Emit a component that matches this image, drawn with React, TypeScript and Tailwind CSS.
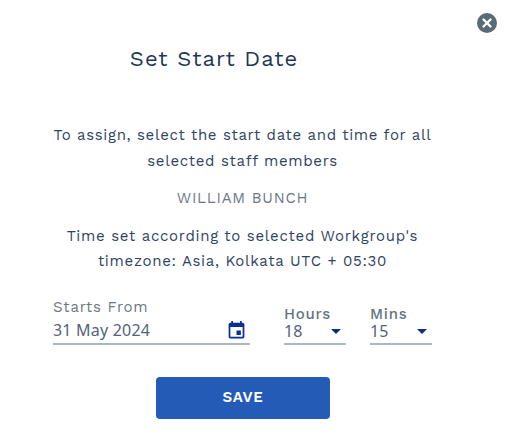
import { X } from "lucide-react";

const textFont = "font-['Work_Sans',Inter,sans-serif]";
const valueFont = "font-['Noto_Sans',sans-serif]";

function CalendarIcon() {
  return (
    <svg viewBox="0 0 24 24" className="mt-px size-[21px] fill-[#0b2f96]" aria-hidden="true">
      <path d="M19 3h-1V1h-2v2H8V1H6v2H5c-1.11 0-1.99.9-1.99 2L3 19c0 1.1.89 2 2 2h14c1.1 0 2-.9 2-2V5c0-1.1-.9-2-2-2zm0 16H5V8h14v11zm-2-7h-5v5h5v-5z" />
    </svg>
  );
}

function TimeSelect({ label, value }: { label: string; value: string }) {
  return (
    <div className="w-[62px]">
      <div className="h-4 text-[15px] leading-4 font-medium tracking-[0.8px] text-[#64737e]">
        {label}
      </div>
      <button
        type="button"
        className={`flex h-[23px] w-full items-center justify-between border-b-2 border-[#a9b8c5] pr-[5px] pb-[3px] text-base leading-none text-[#53637d] ${valueFont}`}
      >
        {value}
        <svg viewBox="0 0 10 5" className="h-[5px] w-2.5 fill-[#0b2f86]" aria-hidden="true">
          <path d="M0 0h10L5 5z" />
        </svg>
      </button>
    </div>
  );
}

export default function App() {
  return (
    <div className={`h-[441px] w-[508px] overflow-hidden bg-white text-[#2f4463] ${textFont}`}>
      <div className="flex h-8 justify-end pt-[13px] pr-[11px]">
        <button
          type="button"
          aria-label="Close"
          className="flex size-5 items-center justify-center rounded-full bg-[#5a6b78] text-white"
        >
          <X className="size-3.5" strokeWidth={4} />
        </button>
      </div>

      <div className="ml-[53px] w-[379px]">
        <h2 className="pt-3 pr-[57px] text-center text-[22px] leading-[30px] tracking-[1.05px] whitespace-nowrap text-[#1f3756]">
          Set Start Date
        </h2>

        <div className="mt-[48px] text-center text-[15px] leading-[26px] whitespace-nowrap">
          <p className="tracking-[0.66px]">To assign, select the start date and time for all</p>
          <p className="tracking-[0.68px]">selected staff members</p>
        </div>

        <p className="mt-[11px] text-center text-[15px] leading-[26px] tracking-[0.75px] text-[#6b7983]">
          WILLIAM BUNCH
        </p>

        <div className="mt-[13px] text-center text-[15px] leading-[25px] whitespace-nowrap">
          <p className="tracking-[0.7px]">Time set according to selected Workgroup's</p>
          <p className="tracking-[0.7px]">timezone: Asia, Kolkata UTC + 05:30</p>
        </div>

        <div className="mt-[23px] flex items-end">
          <div className="w-[197px]">
            <div className="h-5 text-[15px] leading-5 tracking-[0.75px] text-[#6b7983]">
              Starts From
            </div>
            <div className="flex h-[28px] items-center justify-between border-b-2 border-[#a9b8c5] pr-[3px] pb-px">
              <span className={`text-base leading-none tracking-[0.2px] text-[#53637d] ${valueFont}`}>
                31 May 2024
              </span>
              <CalendarIcon />
            </div>
          </div>
          <div className="ml-[34px] flex gap-[24px]">
            <TimeSelect label="Hours" value="18" />
            <TimeSelect label="Mins" value="15" />
          </div>
        </div>

        <button
          type="button"
          className="mt-8 ml-[103px] flex h-[42px] w-[174px] items-center justify-center rounded-[4px] bg-[#235bb7] pb-0.5 text-[15px] font-semibold tracking-[0.7px] text-white"
        >
          SAVE
        </button>
      </div>
    </div>
  );
}
